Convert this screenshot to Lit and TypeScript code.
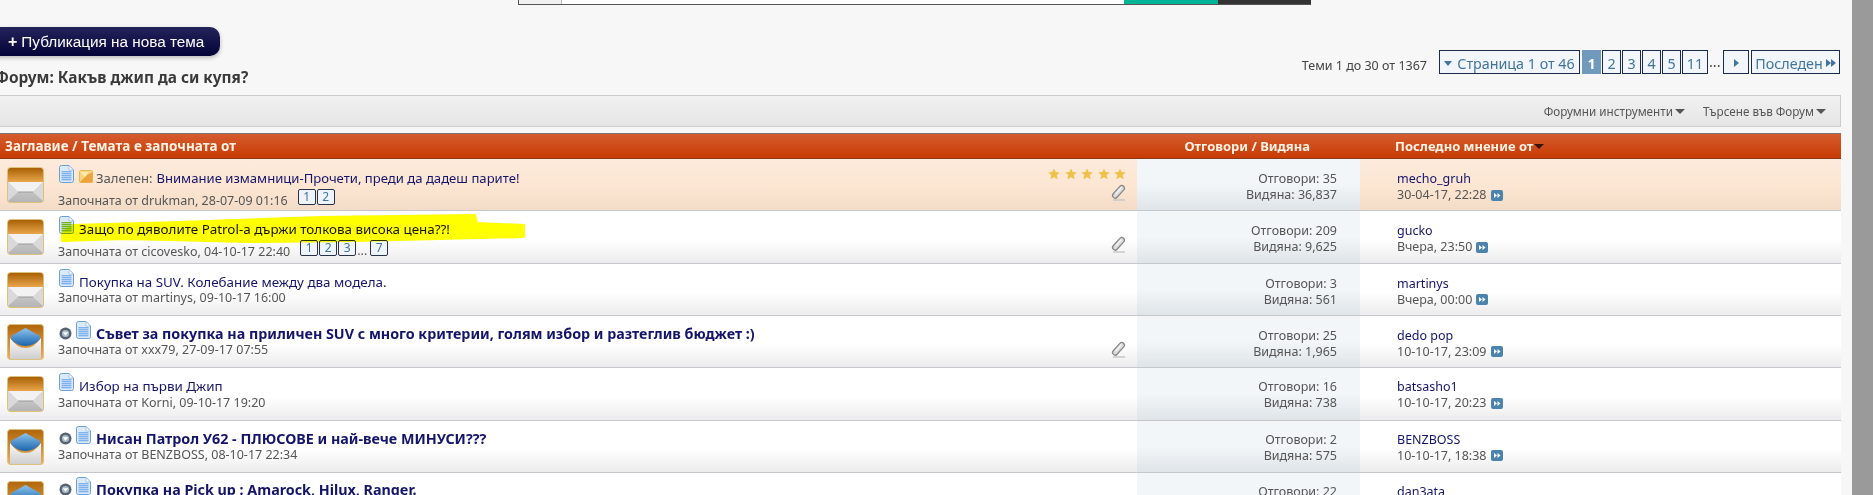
import { LitElement, html, css, svg } from "lit";
import { customElement } from "lit/decorators.js";

const envClosed = html`<svg class="env" viewBox="0 0 37 36" width="37" height="36">
  <defs>
    <linearGradient id="eo" x1="0" y1="0" x2="0" y2="1"><stop offset="0" stop-color="#a86004"/><stop offset="1" stop-color="#eaa64c"/></linearGradient>
    <linearGradient id="eg" x1="0" y1="0" x2="0" y2="1"><stop offset="0" stop-color="#e8e8e8"/><stop offset="1" stop-color="#b4b4b4"/></linearGradient>
  </defs>
  <rect x="0.5" y="0.5" width="36" height="35" rx="3" fill="url(#eg)" stroke="#dcc07e"/>
  <path d="M1 3.5Q1 1 3.5 1h30Q36 1 36 3.5V15H1z" fill="url(#eo)"/>
  <path d="M1 15h35L26 25H11z" fill="#f2f2f2"/>
  <path d="M1 15l10 10-10 9zM36 15L26 25l10 9z" fill="#d9d9d9"/>
  <path d="M11 25h15" stroke="#9a9a9a" stroke-width="1"/>
</svg>`;

const envOpen = html`<svg class="env" viewBox="0 0 37 36" width="37" height="36">
  <defs>
    <linearGradient id="oo" x1="0" y1="0" x2="0" y2="1"><stop offset="0" stop-color="#b0660a"/><stop offset="1" stop-color="#eeb060"/></linearGradient>
    <linearGradient id="ow" x1="0" y1="0" x2="0" y2="1"><stop offset="0" stop-color="#fafafa"/><stop offset="1" stop-color="#cfcfcf"/></linearGradient>
    <linearGradient id="ob" x1="0" y1="0" x2="0" y2="1"><stop offset="0" stop-color="#8cc4ee"/><stop offset="1" stop-color="#1b64ad"/></linearGradient>
  </defs>
  <rect x="0.5" y="0.5" width="36" height="35" rx="3" fill="url(#oo)" stroke="#dcc07e"/>
  <path d="M3 14V34Q3 35 4 35H33Q34 35 34 34V14Q27 24 18.500 24Q10 24 3 14z" fill="url(#ow)"/>
  <path d="M4 12L18.500 4 33 12V15Q27 22 18.500 22Q10 22 4 15z" fill="url(#ob)"/>
</svg>`;

const doc = (green = false) => html`<svg class="doc" viewBox="0 0 15 18" width="15" height="18">
  <path d="M2.500.5H10L14.500 5v10.500a2 2 0 0 1-2 2h-10a2 2 0 0 1-2-2v-13a2 2 0 0 1 2-2z" fill="#dbeafa" stroke="#6c9fd6"/>
  <path d="M10 .5V5h4.500z" fill="#fff" stroke="#8fb6df" stroke-width=".7"/>
  ${[6, 8, 10, 12, 14].map(
    (y) => svg`<rect x="2.500" y="${y}" width="10" height="1.400" fill="${green ? "#74b214" : "#7fb2ea"}"/>`
  )}
</svg>`;

const bullet = html`<svg class="bullet" viewBox="0 0 13 13" width="13" height="13">
  <circle cx="6.500" cy="6.500" r="6" fill="#56636f"/>
  <circle cx="6.500" cy="6.500" r="3.600" fill="#a9bccb"/>
  <path d="M3.800 5.300h5.400L6.500 8.700z" fill="#fff"/>
</svg>`;

const sticky = html`<svg class="sticky" viewBox="0 0 14 13" width="14" height="13">
  <rect x=".5" y=".5" width="13" height="12" rx="1" fill="#f6d57c" stroke="#e7b95a"/>
  <path d="M.5 12.500L8 5l5.500-3v10.500z" fill="#eda33c"/>
  <path d="M1 2h9L6 7z" fill="#fbe9ae"/>
</svg>`;

const clip = html`<svg class="clip" viewBox="0 0 15 17" width="15" height="17">
  <path d="M2 16h12" stroke="#c4c4c4" stroke-width="1.400"/>
  <path d="M4.200 11.500L10.800 4.200" stroke="#858585" stroke-width="6.400" stroke-linecap="round"/>
  <path d="M4.200 11.500L10.800 4.200" stroke="#dcdcdc" stroke-width="4" stroke-linecap="round"/>
  <path d="M5 9.500L10 4" stroke="#f6f6f6" stroke-width="1.200" stroke-linecap="round"/>
</svg>`;

const star = html`<svg class="star" viewBox="0 0 12 12" width="12" height="12">
  <path d="M6 .4l1.700 3.700 4 .4-3 2.700.9 4L6 9.200l-3.600 2 .9-4-3-2.700 4-.4z" fill="#eec14a"/>
</svg>`;

const go = html`<svg class="go" viewBox="0 0 12 11" width="12" height="11">
  <rect width="12" height="11" rx="2" fill="#4a84ad"/>
  <path d="M3 3l3 2.500-3 2.500zM6.500 3l3 2.500-3 2.500z" fill="#fff"/>
</svg>`;

interface Topic {
  title: string;
  author: string;
  when: string;
  replies: string;
  views: string;
  last: string;
  lastWhen: string;
  pad: string;
  spad: string;
  metaGap?: boolean;
  isNew?: boolean;
  prefix?: string;
  pages?: string[];
  stars?: boolean;
  clip?: boolean;
  green?: boolean;
  mark?: boolean;
}

const topics: Topic[] = [
  { title: "Внимание измамници-Прочети, преди да дадеш парите!", prefix: "Залепен:", author: "drukman", when: "28-07-09 01:16", replies: "35", views: "36,837", last: "mecho_gruh", lastWhen: "30-04-17, 22:28", pages: ["1", "2"], stars: true, clip: true, pad: "p11", spad: "p12" },
  { title: "Защо по дяволите Patrol-а държи толкова висока цена??!", author: "cicovesko", when: "04-10-17 22:40", replies: "209", views: "9,625", last: "gucko", lastWhen: "Вчера, 23:50", pages: ["1", "2", "3", "...", "7"], clip: true, green: true, mark: true, pad: "p10", spad: "p12" },
  { title: "Покупка на SUV. Колебание между два модела.", author: "martinys", when: "09-10-17 16:00", replies: "3", views: "561", last: "martinys", lastWhen: "Вчера, 00:00", pad: "p10", spad: "p12" },
  { title: "Съвет за покупка на приличен SUV с много критерии, голям избор и разтеглив бюджет :)", author: "xxx79", when: "27-09-17 07:55", replies: "25", views: "1,965", last: "dedo pop", lastWhen: "10-10-17, 23:09", isNew: true, clip: true, pad: "p10", spad: "p12" },
  { title: "Избор на първи Джип", author: "Korni", when: "09-10-17 19:20", replies: "16", views: "738", last: "batsasho1", lastWhen: "10-10-17, 20:23", pad: "p10", spad: "p11", metaGap: true },
  { title: "Нисан Патрол У62 - ПЛЮСОВЕ и най-вече МИНУСИ???", author: "BENZBOSS", when: "08-10-17 22:34", replies: "2", views: "575", last: "BENZBOSS", lastWhen: "10-10-17, 18:38", isNew: true, pad: "p10", spad: "p11" },
  { title: "Покупка на Pick up : Amarock, Hilux, Ranger.", author: "dan3ata", when: "07-10-17 12:10", replies: "22", views: "1,204", last: "dan3ata", lastWhen: "10-10-17, 17:02", isNew: true, pad: "p9", spad: "p11" },
];

@customElement("app-root")
export class AppRoot extends LitElement {
  static styles = css`
    :host {
      display: block;
      width: 1873px;
      height: 495px;
      overflow: hidden;
      background: #f7f7f7;
      font-family: "Noto Sans", "Liberation Sans", sans-serif;
      font-size: 12px;
      color: #555;
    }
    .page { display: flex; height: 495px; }
    .content { width: 1841px; flex: none; }
    .strip { width: 21px; margin-left: 11px; background: #9a9a9a; flex: none; }

    .search { display: flex; height: 4px; margin-left: 518px; width: 793px; border-bottom: 1px solid #555; }
    .s-a { width: 44px; background: #f0f0f0; border-left: 1px solid #555; border-right: 1px solid #bbb; box-sizing: border-box; }
    .s-b { width: 562px; background: #fff; }
    .s-c { width: 94px; background: #00b597; }
    .s-d { width: 93px; background: #333; }

    .top { display: flex; justify-content: space-between; height: 90px; }
    .left { padding-top: 22px; }
    .new-topic {
      display: flex; align-items: center; box-sizing: border-box; height: 29px; width: 230px;
      margin-left: -10px; padding-left: 18px; border-radius: 10px;
      background: linear-gradient(#24245a, #03033a);
      box-shadow: 0 2px 4px rgba(0, 0, 0, .25);
      color: #fff; font-family: "Liberation Sans", sans-serif; font-size: 15.300px;
    }
    .new-topic b { margin-right: 4px; font-size: 16px; }
    .forum-title { margin: 14px 0 0 -5px; font-size: 15.400px; line-height: 16px; font-weight: 700; color: #3a3a3a; white-space: nowrap; }

    .right { display: flex; align-items: flex-start; padding-top: 45px; }
    .count { margin: 8px 12px 0 0; line-height: 16px; font-size: 12.500px; color: #444; }
    .pager { display: flex; align-items: stretch; height: 24px; font-size: 14.300px; color: #41749c; }
    .pg {
      display: flex; align-items: center; justify-content: center; box-sizing: border-box;
      width: 19px; margin-right: 1px; padding-top: 2px; border: 1px solid #1c2b4a; background: #f2f6fa;
    }
    .pg.cur { background: #7199bb; border-color: #7199bb; color: #fff; font-weight: 700; }
    .pg.first { width: 141px; margin-right: 2px; gap: 5px; }
    .pg.eleven { width: 26px; }
    .dots { width: 14px; color: #444; display: flex; align-items: flex-end; padding-bottom: 3px; box-sizing: border-box; }
    .pg.next { width: 26px; margin-right: 2px; }
    .pg.last { width: 89px; margin-right: 1px; gap: 3px; }
    .tri-d { width: 0; height: 0; border: 4px solid transparent; border-top: 5px solid #41749c; border-bottom: 0; }
    .tri-r { width: 0; height: 0; border: 4px solid transparent; border-left: 5px solid #41749c; border-right: 0; }
    .tris { display: flex; }

    .tools {
      display: flex; justify-content: flex-end; align-items: center; gap: 18px; box-sizing: border-box;
      height: 32px; padding-right: 14px;
      border: 1px solid #ccc; border-left: 0;
      background: linear-gradient(#f1f1f1, #e5e5e5);
      font-size: 11.700px; color: #555;
    }
    .tool { display: flex; align-items: center; gap: 2px; }
    .tool i { width: 0; height: 0; border: 5px solid transparent; border-top: 5px solid #555; border-bottom: 0; }

    .cols { display: grid; grid-template-columns: 1137px 223px 481px; }
    .head {
      height: 26px; margin-top: 6px; align-items: center; box-sizing: border-box;
      border-top: 1px solid #777; border-bottom: 1px solid #8a3a18;
      background: linear-gradient(#d55c2e, #c83b04);
      color: #fff3e6; font-size: 13px; font-weight: 700;
    }
    .head .c1 { padding-left: 5px; font-size: 13.500px; }
    .head .c2 { text-align: right; padding-right: 50px; }
    .head .c3 { padding-left: 35px; display: flex; align-items: center; gap: 1px; }
    .head i { width: 0; height: 0; border: 5px solid transparent; border-top: 5px solid #3a1204; border-bottom: 0; }

    .row {
      position: relative; height: 52.333px; box-sizing: border-box;
      border-bottom: 1px solid #c4c8cc;
      background: linear-gradient(#fff 55%, #ececec);
    }
    .row.sticky-row { background: linear-gradient(#fdeadb, #fce6d2 55%, #f3dcc7); }
    .c1 { display: flex; min-width: 0; }
    .row .c1 { padding-right: 11px; }
    .env { flex: none; margin: 8px 14px 0 7px; }
    .body { flex: 1; min-width: 0; }
    .p9 { padding-top: 9px; }
    .p10 { padding-top: 10px; }
    .p11 { padding-top: 11px; }
    .p12 { padding-top: 12px; }
    .title { display: flex; align-items: flex-start; height: 16px; font-size: 13.400px; line-height: 16px; color: #14146a; white-space: nowrap; }
    .sticky-row .title { font-size: 13.100px; }
    .title.bold { font-size: 14.300px; font-weight: 700; }
    .doc { flex: none; margin: -5px 5px 0 1px; }
    .bullet { flex: none; margin: 1px 3px 0 1px; }
    .sticky { flex: none; margin: 0 3px 0 0; }
    .prefix { color: #555; margin-right: 4px; }
    .meta { font-size: 12.500px; line-height: 16px; color: #555; white-space: nowrap; }
    .meta.gap { margin-top: 1px; }
    .meta.paged { display: flex; align-items: flex-start; margin-top: 3px; }
    .meta.paged > span { margin-top: 4px; }
    .pages { display: flex; margin-left: 10px; }
    .pp {
      box-sizing: border-box; width: 18px; height: 16px; margin-right: 1px; border: 1px solid #27324c; border-radius: 2px;
      background: #eef4fa; color: #41749c; font-size: 12px; line-height: 14px; text-align: center;
    }
    .pd { width: 13px; color: #555; line-height: 22px; }
    .aside { flex: none; display: flex; flex-direction: column; align-items: flex-end; padding: 9px 0 9px; box-sizing: border-box; height: 51px; }
    .stars { display: flex; gap: 4.500px; }
    .clip { margin-top: auto; }
    .c2 { text-align: right; }
    .row .c2 {
      padding-right: 23px; font-size: 12.500px; line-height: 16px; color: #555;
      background: linear-gradient(#f2f6f9 50%, #dfe4e8);
    }
    .row .c3 { padding-left: 37px; font-size: 12.500px; line-height: 16px; color: #555; }
    .user { color: #14146a; }
    .date { display: flex; align-items: center; gap: 4px; }
    .mark { position: absolute; left: 0; top: 0; mix-blend-mode: multiply; pointer-events: none; }
    .mark path { fill: #ffff00; stroke: #ffff00; stroke-width: 2; stroke-linejoin: round; }
  `;

  private topic(t: Topic) {
    return html`<div class="row cols ${t.stars ? "sticky-row" : ""}">
      <div class="c1">
        ${t.isNew ? envOpen : envClosed}
        <div class="body ${t.pad}">
          <div class="title ${t.isNew ? "bold" : ""}">
            ${t.isNew ? bullet : ""}${doc(t.green)}${t.prefix ? sticky : ""}
            ${t.prefix ? html`<span class="prefix">${t.prefix}</span>` : ""}<span>${t.title}</span>
          </div>
          ${t.pages
            ? html`<div class="meta paged">
                <span>Започната от ${t.author}, ${t.when}</span>
                <div class="pages">
                  ${t.pages.map((p) => (p === "..." ? html`<div class="pd">...</div>` : html`<div class="pp">${p}</div>`))}
                </div>
              </div>`
            : html`<div class="meta ${t.metaGap ? "gap" : ""}">Започната от ${t.author}, ${t.when}</div>`}
        </div>
        ${t.clip || t.stars
          ? html`<div class="aside">
              ${t.stars ? html`<div class="stars">${star}${star}${star}${star}${star}</div>` : ""}
              ${t.clip ? clip : ""}
            </div>`
          : ""}
      </div>
      <div class="c2 ${t.spad}">
        <div>Отговори: ${t.replies}</div>
        <div>Видяна: ${t.views}</div>
      </div>
      <div class="c3 ${t.spad}">
        <div class="user">${t.last}</div>
        <div class="date">${t.lastWhen} ${go}</div>
      </div>
      ${t.mark
        ? html`<svg class="mark" width="600" height="52" viewBox="0 0 600 52">
            <path d="M62 22L73 14L179 11L321 6L475 4L477 12L524 14L524 26L357 30L250 31L125 28L62 30z"/>
          </svg>`
        : ""}
    </div>`;
  }

  render() {
    return html`<div class="page">
      <div class="content">
        <div class="search"><div class="s-a"></div><div class="s-b"></div><div class="s-c"></div><div class="s-d"></div></div>
        <div class="top">
          <div class="left">
            <div class="new-topic"><b>+</b>Публикация на нова тема</div>
            <div class="forum-title">Форум: Какъв джип да си купя?</div>
          </div>
          <div class="right">
            <div class="count">Теми 1 до 30 от 1367</div>
            <div class="pager">
              <div class="pg first"><span class="tri-d"></span>Страница 1 от 46</div>
              <div class="pg cur">1</div>
              <div class="pg">2</div>
              <div class="pg">3</div>
              <div class="pg">4</div>
              <div class="pg">5</div>
              <div class="pg eleven">11</div>
              <div class="dots">...</div>
              <div class="pg next"><span class="tri-r"></span></div>
              <div class="pg last">Последен <span class="tris"><span class="tri-r"></span><span class="tri-r"></span></span></div>
            </div>
          </div>
        </div>
        <div class="tools">
          <div class="tool">Форумни инструменти<i></i></div>
          <div class="tool">Търсене във Форум<i></i></div>
        </div>
        <div class="head cols">
          <div class="c1">Заглавие / Темата е започната от</div>
          <div class="c2">Отговори / Видяна</div>
          <div class="c3">Последно мнение от<i></i></div>
        </div>
        ${topics.map((t) => this.topic(t))}
      </div>
      <div class="strip"></div>
    </div>`;
  }
}
